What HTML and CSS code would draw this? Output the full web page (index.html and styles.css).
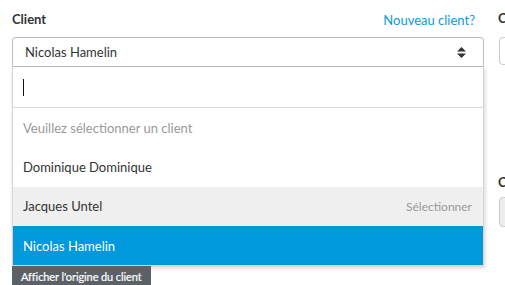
FILE: index.html
```html
<!DOCTYPE html>
<html lang="fr">
<head>
    <meta charset="UTF-8">
    <title>Client</title>
    <link rel="stylesheet" href="styles.css">
</head>
<body>

<div class="form-row">
    <div class="field client-field">
        <div class="field-head">
            <label>Client</label>
            <a class="new-link" href="#">Nouveau client?</a>
        </div>

        <div class="select-box">
            <span>Nicolas Hamelin</span>
            <svg class="caret" width="9" height="11" viewBox="0 0 9 11">
                <path d="M4.5 0 L9 4.5 L0 4.5 Z M0 6.5 L9 6.5 L4.5 11 Z" fill="#333"/>
            </svg>
        </div>

        <div class="dropdown">
            <div class="search"><span class="cursor"></span></div>
            <ul class="options">
                <li class="placeholder">Veuillez sélectionner un client</li>
                <li>Dominique Dominique</li>
                <li class="hover">Jacques Untel <span class="hint">Sélectionner</span></li>
                <li class="selected">Nicolas Hamelin</li>
            </ul>
        </div>

        <button class="origin-btn">Afficher l'origine du client</button>
    </div>

    <div class="field side-field">
        <label>Contact</label>
        <div class="input-box"></div>
        <label class="second">Catégorie</label>
        <div class="input-box disabled"></div>
    </div>
</div>

</body>
</html>
```

FILE: styles.css
```css
/* === Client picker === */
body {
  margin: 0;
  background: #fff;
  color: #333;
  font-family: Lato, "Open Sans", sans-serif;
  font-size: 13px;
  overflow: hidden;
}

.form-row {
  display: flex;
  gap: 14px;
  padding-left: 12px;
}

.client-field {
  width: 472px;
  flex-shrink: 0;
}

.field-head {
  display: flex;
  justify-content: space-between;
  align-items: center;
  height: 37px;
  padding-right: 9px;
}

label {
  font-weight: bold;
  font-size: 13px;
  color: #333;
}

.new-link {
  color: #0a9ad9;
  text-decoration: none;
  font-size: 13px;
  padding-top: 2px;
}

.select-box {
  box-sizing: border-box;
  height: 30px;
  border: 1px solid #bdbdbd;
  border-radius: 3px 3px 0 0;
  display: flex;
  align-items: center;
  justify-content: space-between;
  padding: 0 17px 0 12px;
}

.dropdown {
  border: 1px solid #d6d6d6;
  border-top: none;
  box-shadow: 1px 2px 4px rgba(0, 0, 0, 0.18);
}

.search {
  height: 40px;
  border-bottom: 1px solid #d6d6d6;
  display: flex;
  align-items: center;
  padding-left: 10px;
}

.cursor {
  width: 1px;
  height: 17px;
  background: #111;
}

.options {
  list-style: none;
  margin: 0;
  padding: 0;
}

.options li {
  box-sizing: border-box;
  height: 39.3px;
  display: flex;
  align-items: center;
  justify-content: space-between;
  padding: 0 11px 0 10px;
}

.options .placeholder {
  color: #999;
}

.options .hover {
  background: #efefef;
}

.hint {
  color: #999;
  font-size: 12px;
}

.options .selected {
  background: #0099db;
  color: #fff;
}

.origin-btn {
  display: block;
  background: #5c6167;
  color: #fff;
  border: none;
  border-radius: 0;
  font-family: inherit;
  font-size: 11px;
  letter-spacing: -0.1px;
  -webkit-text-stroke: 0.2px #fff;
  height: 20px;
  padding: 0 9px;
}

.side-field {
  width: 60px;
}

.side-field label {
  display: block;
  height: 37px;
  line-height: 37px;
}

.input-box {
  box-sizing: border-box;
  height: 28px;
  margin-left: 1px;
  border: 1px solid #ccc;
  border-radius: 4px;
}

.side-field .second {
  margin-top: 99px;
  height: 33px;
}

.input-box.disabled {
  height: 30px;
  background: #eee;
}
```
